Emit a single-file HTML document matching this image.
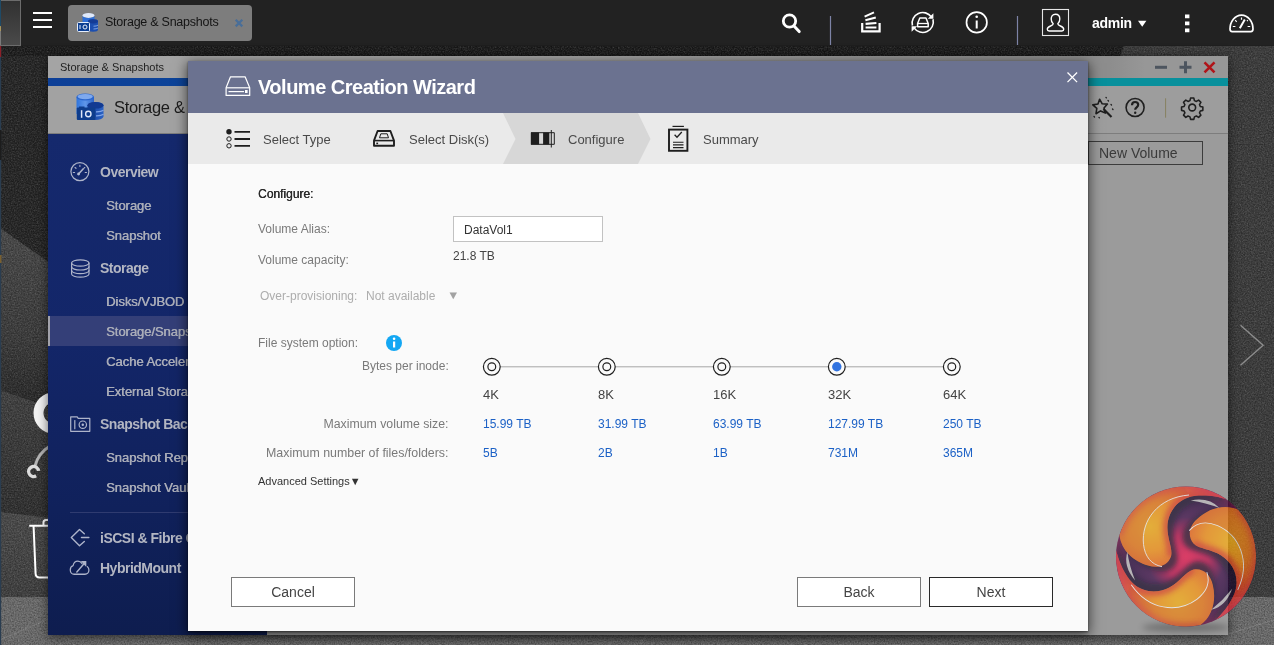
<!DOCTYPE html>
<html lang="en">
<head>
<meta charset="utf-8">
<title>Volume Creation Wizard</title>
<style>
*{box-sizing:border-box;margin:0;padding:0}
html,body{width:1274px;height:645px;overflow:hidden}
body{font-family:"Liberation Sans",sans-serif;background:#2b2b2b;position:relative;color:#333}
.abs{position:absolute}
.t{position:absolute;white-space:nowrap;line-height:1}
#topbar,#win,#dlg{will-change:transform}
/* desktop */
#desk{position:absolute;left:0;top:0;width:1274px;height:645px}
/* top bar */
#topbar{position:absolute;left:0;top:0;width:1274px;height:46px;background:linear-gradient(180deg,#222 0,#222 45px,#1f1f1f 45px,#1f1f1f 46px)}
#tab{position:absolute;left:68px;top:5px;width:184px;height:36px;background:#7d7d7d;border-radius:4px}
/* window */
#win{position:absolute;left:48px;top:56px;width:1180px;height:579px;background:#9b9b9b;box-shadow:0 2px 10px rgba(0,0,0,.6)}
#wtitle{position:absolute;left:0;top:0;width:1180px;height:22px;background:linear-gradient(90deg,#a4a4a4 0%,#a4a4a4 40%,#8d8d8d 80%,#8d8d8d 90%,#979797 93%,#979797 100%)}
#wstripe{position:absolute;left:0;top:22px;width:1180px;height:8px;background:linear-gradient(90deg,#0d3f97 0%,#0c4a9c 25%,#0a7fa6 60%,#08909c 88%,#08909c 100%)}
#wtool{position:absolute;left:0;top:30px;width:1180px;height:48px;background:linear-gradient(90deg,#a2a2a2 0%,#a2a2a2 50%,#9d9d9d 90%);border-bottom:1px solid #7d7d7d}
#side{position:absolute;left:0;top:78px;width:219px;height:501px;background:linear-gradient(180deg,#15296d 0%,#132669 40%,#10215b 75%,#0e1d4f 100%)}
.nav{position:absolute;white-space:nowrap;line-height:1;color:#a9acb8;font-size:13px;font-weight:normal;letter-spacing:-0.05px;text-shadow:0.5px 0 0 #a9acb8}
.navh{font-size:14px;color:#b3b6c2;letter-spacing:-0.5px;font-weight:bold;text-shadow:none}
/* dialog */
#dlg{position:absolute;left:188px;top:61px;width:900px;height:570px;background:#fafafa;box-shadow:0 3px 12px 1px rgba(0,0,0,.62),0 1px 2px rgba(0,0,0,.5)}
#dhead{position:absolute;left:0;top:0;width:900px;height:52px;background:#6b7290}
#dsteps{position:absolute;left:0;top:52px;width:900px;height:51px;background:#eaeaea}
.lbl{position:absolute;white-space:nowrap;line-height:1;font-size:12px;color:#7a7a7a}
.val{position:absolute;white-space:nowrap;line-height:1;font-size:12px;color:#1c61c6}
.btn{position:absolute;height:30px;width:124px;border:1px solid #7a7a7a;background:#fff;font-size:14px;color:#444;text-align:center;line-height:28px}
</style>
</head>
<body>
<div id="desk">
<svg width="1274" height="645" viewBox="0 0 1274 645" style="position:absolute;left:0;top:0">
  <defs>
    <filter id="noiseW" x="0" y="0" width="100%" height="100%">
      <feTurbulence type="fractalNoise" baseFrequency="0.7" numOctaves="2" seed="7" result="n"/>
      <feColorMatrix type="matrix" values="0 0 0 0 1  0 0 0 0 1  0 0 0 0 1  0.3 0 0 0 -0.11"/>
    </filter>
    <filter id="noiseB" x="0" y="0" width="100%" height="100%">
      <feTurbulence type="fractalNoise" baseFrequency="0.7" numOctaves="2" seed="23" result="n"/>
      <feColorMatrix type="matrix" values="0 0 0 0 0  0 0 0 0 0  0 0 0 0 0  0.6 0 0 0 -0.22"/>
    </filter>
    <linearGradient id="pgA" x1="0" y1="0" x2="0" y2="1"><stop offset="0" stop-color="#494949"/><stop offset="0.6" stop-color="#3a3a3a"/><stop offset="1" stop-color="#252525"/></linearGradient>
    <linearGradient id="pgB" x1="0" y1="0" x2="0" y2="1"><stop offset="0" stop-color="#414141"/><stop offset="1" stop-color="#2d2d2d"/></linearGradient>
    <linearGradient id="pgC" x1="0" y1="0" x2="0" y2="1"><stop offset="0" stop-color="#4a4a4a"/><stop offset="1" stop-color="#3e3e3e"/></linearGradient>
  </defs>
  <rect width="1274" height="645" fill="#242424"/>
  <rect x="0" y="45" width="1274" height="11" fill="#1b1b1b"/>
  <!-- lighter polygons on left -->
  <polygon points="0,228 60,270 60,411 0,390" fill="url(#pgA)"/>
  <polygon points="0,390 60,411 60,519 0,512" fill="url(#pgB)"/>
  <polygon points="0,512 60,519 60,597 0,597" fill="url(#pgC)"/>
  <!-- right lighter polygon -->
  <polygon points="1124,45 1274,45 1274,597 1190,597 1190,56 1120,56" fill="#3b3b3b"/>
  <!-- bottom bar -->
  <rect x="0" y="597" width="1274" height="48" fill="#6c6c6c"/>
  <path d="M0 640L70 610M640 645l20-35M1228 634l46-14" stroke="#808080" stroke-width="1" fill="none"/>
  <rect width="1274" height="645" fill="#fff" filter="url(#noiseW)"/>
  <rect width="1274" height="645" fill="#000" filter="url(#noiseB)"/>
  <!-- left edge sliver of another window -->
  <rect x="0" y="45" width="1.200" height="600" fill="#2a3d50"/>
  <rect x="0" y="46" width="1.200" height="11" fill="#8c2028"/>
  <rect x="0" y="255" width="1.500" height="8" fill="#7a6030"/>
  <rect x="0" y="130" width="1.500" height="30" fill="#1c1c1c"/>
  <!-- desktop icons partially hidden -->
  <circle cx="54.200" cy="413" r="15.700" fill="none" stroke="#f2f2f2" stroke-width="10"/>
  <path d="M50 446c-8 5-13 12-15 20" fill="none" stroke="#b5b5b5" stroke-width="3"/>
  <circle cx="33.600" cy="471.500" r="5" fill="none" stroke="#dcdcdc" stroke-width="3.400" stroke-dasharray="25 6.400" transform="rotate(60 33.600 471.500)"/>
  <path d="M29.200 525.800H50M43.500 525.800v-3.300a2.500 2.500 0 0 1 2.500-2.500h4M33.600 526.500l2 47.500a3.500 3.500 0 0 0 3.500 3.400H50" fill="none" stroke="#fff" stroke-width="2"/>
  <!-- next arrow -->
  <path d="M1240.500 325.300l22.600 20l-22.600 20" fill="none" stroke="#8c8c8c" stroke-width="1.400"/>
</svg>
</div>

<div id="topbar">
  <div class="abs" style="left:0;top:0;width:21px;height:46px;background:linear-gradient(180deg,#313131,#4a4a4a);border:1px solid #6c6c6c"></div>
  <div class="abs" style="left:0;top:0;width:1px;height:45px;background:linear-gradient(180deg,#1f4a66 0%,#1f4a66 57%,#a8945a 59%,#a8945a 68%,#7a7a7a 70%,#7a7a7a 100%)"></div>
  <!-- hamburger -->
  <div class="abs" style="left:33px;top:12px;width:19px;height:2px;background:#fff"></div>
  <div class="abs" style="left:33px;top:19px;width:19px;height:2px;background:#fff"></div>
  <div class="abs" style="left:33px;top:26px;width:19px;height:2px;background:#fff"></div>
  <div id="tab">
    <div class="t" style="left:37px;top:11px;font-size:12.5px;letter-spacing:-0.25px;color:#141414">Storage &amp; Snapshots</div>
  </div>
  <div class="t" style="left:1092px;top:16px;font-size:14px;font-weight:bold;color:#fff;letter-spacing:-0.3px">admin</div>
  <svg class="abs" style="left:0;top:0" width="1274" height="45" viewBox="0 0 1274 45" fill="none" stroke="#fff" stroke-linecap="butt">
    <!-- tab app icon -->
    <g stroke="none">
      <ellipse cx="88.500" cy="15.500" rx="6" ry="2.500" fill="#dfe9fb"/>
      <path d="M82.500 15.500v9h12v-9a6 2.500 0 0 1-12 0z" fill="#2f6fd6"/>
      <path d="M88 21.500a5 2.200 0 0 1 10 0v8a5 2.200 0 0 1-10 0z" fill="#1c4fb0"/>
      <ellipse cx="93" cy="21.300" rx="5" ry="2.100" fill="#143c96"/>
      <path d="M93.500 26.200a5 2 0 0 0 4.500-1M93.500 29a5 2 0 0 0 4.500-1" stroke="#7fa4e6" stroke-width="1" fill="none"/>
      <rect x="77.500" y="22.500" width="12" height="9" rx="1" fill="#0d3f92" stroke="#e6eefc" stroke-width="1"/>
      <circle cx="85" cy="27" r="2" fill="none" stroke="#e6eefc" stroke-width="1"/>
      <rect x="79.500" y="25" width="1" height="4" fill="#e6eefc"/>
    </g>
    <path d="M235.700 19.800l6.600 6.600M242.300 19.800l-6.600 6.600" stroke="#496e98" stroke-width="2.300"/>
    <!-- search -->
    <circle cx="789.500" cy="21" r="6.200" stroke-width="2.800"/>
    <path d="M794 26l5.200 5.600" stroke-width="3" stroke-linecap="round"/>
    <!-- separators -->
    <path d="M830.500 16v29M1017.500 16v29" stroke="#7d83a6" stroke-width="1.200"/>
    <!-- inbox / tasks -->
    <path d="M862.200 23v8.400h17.400V23" stroke-width="2.200"/>
    <path d="M865.600 27.500h10.800M865.600 23.900l10.800-0.900M865.400 20.200l10.400-2.600M864.600 16.600l9.400-4.200" stroke-width="2.100"/>
    <!-- sync drive -->
    <path d="M912.400 25.500a10.600 10.600 0 0 1 19-8.500M933 19.300a10.600 10.600 0 0 1-19 8.600" stroke-width="1.600"/>
    <path d="M933.400 13.200v5.600h-5.600zM911.600 31.800v-5.600h5.600z" fill="#fff" stroke="none"/>
    <path d="M919.800 17.900h6.200l2.200 5.600v3.300h-10.600v-3.300z" stroke-width="1.500" stroke-linejoin="round"/>
    <path d="M917.600 23.500h10.600" stroke-width="1.300"/>
    <!-- info -->
    <circle cx="976.700" cy="22.400" r="10.200" stroke-width="1.700"/>
    <path d="M976.700 20.500v8" stroke-width="2"/>
    <circle cx="976.700" cy="16.800" r="1.300" fill="#fff" stroke="none"/>
    <!-- user -->
    <rect x="1042.500" y="9.500" width="26" height="26" stroke="#e6e6e6" stroke-width="1.100"/>
    <path d="M1055.500 14.200c3 0 4.300 2.200 4.300 4.800c0 2.300-1 3.900-2 4.800c0 1.200 1 1.600 2.600 2.200c2.200 0.800 3.300 1.700 3.300 3.300c0 1-0.800 1.700-1.800 1.700h-12.800c-1 0-1.800-0.700-1.800-1.700c0-1.600 1.100-2.500 3.300-3.300c1.600-0.600 2.600-1 2.600-2.200c-1-0.900-2-2.500-2-4.800c0-2.600 1.300-4.800 4.300-4.800z" stroke-width="1.400"/>
    <!-- caret -->
    <path d="M1138 20.800h8.400l-4.200 6z" fill="#fff" stroke="none"/>
    <!-- dots -->
    <path d="M1185 14.500h4.400v3.800H1185zM1185 21.500h4.400v3.800H1185zM1185 28.500h4.400v3.800H1185z" fill="#fff" stroke="none"/>
    <!-- gauge -->
    <path d="M1232.200 31.700c-1.200 0-2.200-1-2.200-2.600c0-7.400 5-14 11.500-14s11.500 6.600 11.500 14c0 1.600-1 2.600-2.200 2.600z" stroke-width="1.700"/>
    <path d="M1239.800 28.200l5-8.600" stroke-width="2"/>
    <path d="M1232.800 26.500h2.600M1247.600 26.500h2.600M1241.500 17.600v2.200M1235.200 20.200l1.500 1.600M1247.800 20.200l-0.800 0.900" stroke-width="1.200"/>
  </svg>
</div>

<div id="win">
  <div id="wtitle"><div class="t" style="left:12px;top:6px;font-size:11px;color:#222">Storage &amp; Snapshots</div></div>
  <div id="wstripe"></div>
  <div id="wtool">
    <div class="t" style="left:66px;top:13px;font-size:16.5px;letter-spacing:-0.3px;color:#1c1c1c">Storage &amp; Snapshots</div>
  </div>
  <div id="side">
    <div class="abs" style="left:0;top:182px;width:219px;height:30px;background:#343f78"></div>
    <div class="abs" style="left:0;top:182px;width:2px;height:30px;background:#a2a2aa"></div>
    <div class="nav navh" style="left:52px;top:31px">Overview</div>
    <div class="nav" style="left:58px;top:65px">Storage</div>
    <div class="nav" style="left:58px;top:95px">Snapshot</div>
    <div class="nav navh" style="left:52px;top:127px">Storage</div>
    <div class="nav" style="left:58px;top:161px">Disks/VJBOD</div>
    <div class="nav" style="left:58px;top:191px">Storage/Snapshots</div>
    <div class="nav" style="left:58px;top:221px">Cache Acceleration</div>
    <div class="nav" style="left:58px;top:251px">External Storage</div>
    <div class="nav navh" style="left:52px;top:283px">Snapshot Backup</div>
    <div class="nav" style="left:58px;top:317px">Snapshot Replica</div>
    <div class="nav" style="left:58px;top:347px">Snapshot Vault</div>
    <div class="abs" style="left:22px;top:378px;width:197px;height:1px;background:#2f3b70"></div>
    <div class="nav navh" style="left:52px;top:397px">iSCSI &amp; Fibre Channel</div>
    <div class="nav navh" style="left:52px;top:427px">HybridMount</div>
  </div>
  <svg class="abs" style="left:0;top:0" width="1180" height="578" viewBox="0 0 1180 578" fill="none">
    <!-- app icon -->
    <defs>
      <linearGradient id="cylA" x1="0" y1="0" x2="1" y2="0"><stop offset="0" stop-color="#2f74dc"/><stop offset="0.5" stop-color="#5f97ea"/><stop offset="1" stop-color="#2a63c8"/></linearGradient>
      <linearGradient id="cylB" x1="0" y1="0" x2="1" y2="0"><stop offset="0" stop-color="#16409c"/><stop offset="1" stop-color="#2a62c4"/></linearGradient>
    </defs>
    <path d="M28.500 41v17h17.500V41z" fill="url(#cylA)"/>
    <ellipse cx="37.200" cy="41" rx="8.800" ry="3.600" fill="#2a66cf"/>
    <ellipse cx="37.200" cy="40.600" rx="7.600" ry="2.700" fill="#7fa9ee"/>
    <path d="M39.500 49.500a8 3.400 0 0 1 16 0v11a8 3.400 0 0 1-16 0z" fill="url(#cylB)"/>
    <ellipse cx="47.500" cy="49.300" rx="8" ry="3.300" fill="#123a92"/>
    <path d="M48 55.800a8 3 0 0 0 7.500-1.500M48 59.800a8 3 0 0 0 7.500-1.500" stroke="#7fa4e6" stroke-width="1.300"/>
    <rect x="28.800" y="51.500" width="18.600" height="12.600" rx="1" fill="#0e3d8c"/>
    <path d="M31 50.500h5.500v1.500H31z" fill="#0e3d8c"/>
    <circle cx="40.300" cy="58" r="2.700" stroke="#dfe8f8" stroke-width="1.400"/>
    <path d="M33.600 54.200v7.600" stroke="#dfe8f8" stroke-width="1.500"/>
    <!-- window controls -->
    <path d="M1107 11.300h12" stroke="#4d555f" stroke-width="3"/>
    <path d="M1131.500 11.300h12M1137.500 5.300v12" stroke="#4d555f" stroke-width="3"/>
    <path d="M1156.500 6.300l10 10M1166.500 6.300l-10 10" stroke="#b01419" stroke-width="2.600"/>
    <!-- toolbar right icons -->
    <g stroke="#1f1f1f" stroke-width="1.600" stroke-linejoin="round">
      <path d="M1051.600 43.200l2.600 4.600l5.200 0.300l-3.400 4l1.400 5l-4.800-2.200l-4.600 2.800l0.800-5.300l-4-3.500l5.200-0.900z"/>
      <path d="M1055.500 53l8 8" stroke-width="2.200"/>
      <path d="M1060 44.500l0.500 0.500M1063 48.500l0.500 0.500M1064.500 53l0.500 0.500M1058 41.500l0.400 0.400M1046 60.500l0.500 0.500M1051 61.500l0.400 0.400" stroke-width="1.300" stroke-linecap="round"/>
      <circle cx="1087.100" cy="51.500" r="9"/>
      <path d="M1084 49.200c0-2 1.300-3.200 3.100-3.200s3.100 1.100 3.100 2.800c0 2.600-3 2.500-3 5" stroke-width="2.200"/>
      <circle cx="1087.200" cy="56.800" r="1.200" fill="#1f1f1f" stroke="none"/>
      <path d="M1117.600 42.300v19.400" stroke="#86815f" stroke-width="1"/>
      <circle cx="1144.200" cy="51.500" r="3.400"/>
      <path id="gear" transform="translate(1144.200 51.500) scale(0.82) translate(-1144.200 -51.500)" stroke-width="1.900" d="M1142.200 40h4l0.700 3.100l2.400 1l2.700-1.700l2.800 2.800l-1.700 2.700l1 2.400l3.100 0.700v4l-3.100 0.700l-1 2.400l1.700 2.700l-2.800 2.800l-2.700-1.700l-2.400 1l-0.700 3.100h-4l-0.700-3.100l-2.400-1l-2.700 1.700l-2.800-2.800l1.700-2.700l-1-2.400l-3.100-0.700v-4l3.100-0.700l1-2.400l-1.700-2.700l2.800-2.800l2.700 1.700l2.400-1z"/>
    </g>
    <!-- sidebar icons -->
    <g stroke="#aeb4ca" stroke-width="1.200" stroke-linecap="round" stroke-linejoin="round">
      <circle cx="31.900" cy="115.600" r="9"/>
      <path d="M30.300 118.200l5-5.400" stroke-width="1.600"/>
      <circle cx="30.600" cy="118" r="1.400" fill="#b3bad2" stroke="none"/>
      <path d="M25.300 116.500l1.300 0M27 111.500l1 0.800M31.900 109.200v1.300M36.800 111.500l-0.600 0.500M38.500 116.500h-1.300" stroke-width="1.100"/>
      <!-- storage db -->
      <ellipse cx="32.300" cy="207" rx="8.700" ry="3.200"/>
      <path d="M23.600 207v11a8.700 3.200 0 0 0 17.400 0v-11"/>
      <path d="M23.600 210.800a8.700 3.200 0 0 0 17.400 0M23.600 214.500a8.700 3.200 0 0 0 17.400 0"/>
      <!-- snapshot -->
      <path d="M22.700 375.300v-14.500h6.500l1 1.600h11.600v12.900z"/>
      <path d="M26.800 364.500v8.200"/>
      <circle cx="34.800" cy="368.700" r="3.700"/>
      <circle cx="34.800" cy="368.700" r="1.200" fill="#b3bad2" stroke="none"/>
      <!-- iscsi -->
      <path d="M36.300 477.800l-4.800-4.300l-8.200 8.100l8.200 8.100l4.800-4.300" stroke-width="1.400"/>
      <path d="M33.500 481.600h7.300" stroke-width="1.500"/>
      <!-- hybrid -->
      <g transform="translate(22 0) scale(0.86 1) translate(-22 0)">
      <path d="M33.500 507.500c-1.200-1.600-3-2.400-4.800-2.400c-2.900 0-5.100 2-5.600 4.600c-2 0.600-3.300 2.200-3.300 4.200c0 2.400 2 4.300 4.500 4.300h12.600c2.600 0 4.600-1.800 4.600-4.200c0-1.300-0.600-2.500-1.700-3.300" stroke-width="1.400" transform="translate(2.500,0)"/>
      <path d="M30 516l9.500-9.500" stroke-width="1.700"/>
      <path d="M34.500 505h6.500v6z" fill="#aeb4ca" stroke="none"/>
      </g>
    </g>
  </svg>
  <div class="abs" style="left:1040px;top:85px;width:115px;height:24px;border:1px solid #3c3c3c"></div>
  <div class="t" style="left:1051px;top:90px;font-size:14px;color:#3a3a3a">New Volume</div>
</div>

<div id="dlg">
  <div id="dhead">
    <div class="t" style="left:70px;top:16px;font-size:20px;font-weight:bold;color:#fff;letter-spacing:-0.5px">Volume Creation Wizard</div>
    <svg class="abs" style="left:0;top:0" width="900" height="52" viewBox="0 0 900 52" fill="none" stroke="#fff">
      <path d="M42.500 15.800h14.600l4.600 11v7.600h-23.600v-7.600z" stroke-width="1.200" stroke-linejoin="round"/>
      <path d="M38.100 26.800h23.600" stroke-width="1.200"/>
      <path d="M40.500 30.600h15.500" stroke-width="1.200"/>
      <rect x="57" y="29" width="2.600" height="3" fill="#fff" stroke="none"/>
      <path d="M879.500 11.500l9.600 9.600M889.100 11.500l-9.600 9.600" stroke-width="1.300"/>
    </svg>
  </div>
  <div id="dsteps">
    <svg class="abs" style="left:0;top:0" width="900" height="52" viewBox="0 0 900 52">
      <polygon points="315,0 450,0 462.500,26 450,51 315,51 327.500,26" fill="#d7d7d7"/>
      <g fill="none" stroke="#1e1e1e">
        <!-- list -->
        <circle cx="41" cy="18.800" r="2.700" fill="#1e1e1e" stroke="none"/>
        <circle cx="41" cy="26" r="2.200" stroke-width="1"/>
        <circle cx="41" cy="32.800" r="2.200" stroke-width="1"/>
        <path d="M46.500 18.800h15.500M46.500 26h15.500M46.500 32.800h15.500" stroke-width="1.800"/>
        <!-- disk -->
        <path d="M189.600 18h12.800l3.600 9.600v5.100h-20v-5.100z" stroke-width="1.900" stroke-linejoin="round"/>
        <path d="M186 27.600h20" stroke-width="1.600"/>
        <path d="M192.800 20.800h6.400l1.300 4h-9z" stroke-width="1"/>
        <rect x="188.300" y="29.600" width="1.800" height="1.600" fill="#1e1e1e" stroke="none"/>
        <!-- configure -->
        <rect x="342.800" y="19.500" width="8.300" height="12" fill="#1e1e1e" stroke="none"/>
        <rect x="355.100" y="19.500" width="6.200" height="12" fill="#1e1e1e" stroke="none"/>
        <path d="M343 19.700h23.300v11.600H343" stroke-width="1"/>
        <path d="M363.300 17v17.500" stroke-width="1"/>
        <!-- summary -->
        <rect x="481" y="16.600" width="18.400" height="21.200" stroke-width="1.900"/>
        <path d="M484.500 13.400h11.400" stroke-width="1.200"/>
        <path d="M486.600 21.800l2.400 2.400l4.800-5.200" stroke-width="1.300"/>
        <path d="M485 29.200h10.500M485 31.900h10.500M485 34.600h10.500" stroke-width="1.100"/>
      </g>
    </svg>
    <div class="t" style="left:75px;top:20px;font-size:13px;color:#4a4a4a">Select Type</div>
    <div class="t" style="left:221px;top:20px;font-size:13px;color:#4a4a4a">Select Disk(s)</div>
    <div class="t" style="left:380px;top:20px;font-size:13px;color:#4a4a4a">Configure</div>
    <div class="t" style="left:515px;top:20px;font-size:13px;color:#4a4a4a">Summary</div>
  </div>

  <div class="lbl" style="left:70px;top:127px;color:#2a2a2a;text-shadow:0.3px 0 0 #2a2a2a">Configure:</div>
  <div class="lbl" style="left:70px;top:162px">Volume Alias:</div>
  <div class="abs" style="left:265px;top:155px;width:150px;height:26px;border:1px solid #c2c2c2;background:#fff"></div>
  <div class="lbl" style="left:276px;top:163px;color:#333">DataVol1</div>
  <div class="lbl" style="left:70px;top:193px">Volume capacity:</div>
  <div class="lbl" style="left:265px;top:189px;color:#444">21.8 TB</div>
  <div class="lbl" style="left:72px;top:229px;color:#adadad">Over-provisioning:</div>
  <div class="lbl" style="left:178px;top:229px;color:#adadad">Not available</div>
  <div class="lbl" style="left:259px;top:229px;color:#a2a2a2;font-size:11px;transform:scale(1.15,1.05);transform-origin:left center">▼</div>
  <div class="lbl" style="left:70px;top:276px">File system option:</div>
  <div class="lbl" style="left:174px;top:299px">Bytes per inode:</div>
  <div class="lbl" style="right:639.500px;top:357px;font-size:12.300px">Maximum volume size:</div>
  <div class="lbl" style="right:639.500px;top:386px;font-size:12.400px">Maximum number of files/folders:</div>

  <svg class="abs" style="left:0;top:0" width="900" height="569" viewBox="0 0 900 569" fill="none">
    <circle cx="206" cy="282" r="8" fill="#13a7f3"/>
    <rect x="205" y="280.500" width="2.200" height="6" fill="#fff"/>
    <circle cx="206.100" cy="277.800" r="1.300" fill="#fff"/>
    <path d="M312 305.800H755" stroke="#a6a6a6" stroke-width="1"/>
    <g stroke="#1f1f1f" stroke-width="1.200" fill="#fafafa">
      <circle cx="303.800" cy="305.800" r="8.400"/><circle cx="303.800" cy="305.800" r="3.900"/>
      <circle cx="418.800" cy="305.800" r="8.400"/><circle cx="418.800" cy="305.800" r="3.900"/>
      <circle cx="533.800" cy="305.800" r="8.400"/><circle cx="533.800" cy="305.800" r="3.900"/>
      <circle cx="648.800" cy="305.800" r="8.400"/>
      <circle cx="763.800" cy="305.800" r="8.400"/><circle cx="763.800" cy="305.800" r="3.900"/>
    </g>
    <circle cx="648.800" cy="305.800" r="4.700" fill="#3173e0"/>
  </svg>
  <div class="lbl" style="left:295px;top:327px;font-size:13px;color:#444">4K</div>
  <div class="lbl" style="left:410px;top:327px;font-size:13px;color:#444">8K</div>
  <div class="lbl" style="left:525px;top:327px;font-size:13px;color:#444">16K</div>
  <div class="lbl" style="left:640px;top:327px;font-size:13px;color:#444">32K</div>
  <div class="lbl" style="left:755px;top:327px;font-size:13px;color:#444">64K</div>

  <div class="val" style="left:295px;top:357px">15.99 TB</div>
  <div class="val" style="left:410px;top:357px">31.99 TB</div>
  <div class="val" style="left:525px;top:357px">63.99 TB</div>
  <div class="val" style="left:640px;top:357px">127.99 TB</div>
  <div class="val" style="left:755px;top:357px">250 TB</div>

  <div class="val" style="left:295px;top:386px">5B</div>
  <div class="val" style="left:410px;top:386px">2B</div>
  <div class="val" style="left:525px;top:386px">1B</div>
  <div class="val" style="left:640px;top:386px">731M</div>
  <div class="val" style="left:755px;top:386px">365M</div>

  <div class="lbl" style="left:70px;top:415px;font-size:11px;color:#333">Advanced Settings▼</div>

  <div class="btn" style="left:43px;top:516px">Cancel</div>
  <div class="btn" style="left:609px;top:516px">Back</div>
  <div class="btn" style="left:741px;top:516px;border-color:#2a2a2a">Next</div>
</div>
<svg class="abs" style="left:1100px;top:470px" width="174" height="175" viewBox="-86 -86.500 174 175">
  <defs>
    <radialGradient id="lgBase" cx="0" cy="0" r="70" gradientUnits="userSpaceOnUse">
      <stop offset="0" stop-color="#f21a52"/><stop offset="0.320" stop-color="#c01250"/><stop offset="0.560" stop-color="#43124d"/><stop offset="0.800" stop-color="#2b0a3f"/><stop offset="1" stop-color="#6c0c43"/>
    </radialGradient>
    <radialGradient id="lgLobe" cx="-36" cy="-30" r="70" gradientUnits="userSpaceOnUse">
      <stop offset="0" stop-color="#ffb616"/><stop offset="0.350" stop-color="#ff9716"/><stop offset="0.680" stop-color="#f55a1c"/><stop offset="1" stop-color="#e42443"/>
    </radialGradient>
    <filter id="lgBlur" x="-30%" y="-30%" width="160%" height="160%"><feGaussianBlur stdDeviation="2.200"/></filter>
    <filter id="lgBlur2" x="-30%" y="-100%" width="160%" height="300%"><feGaussianBlur stdDeviation="3"/></filter>
    <filter id="lgBlur3" x="-30%" y="-30%" width="160%" height="160%"><feGaussianBlur stdDeviation="2.600"/></filter>
    <clipPath id="lgClip"><circle cx="0" cy="0" r="70"/></clipPath>
    <path id="lobeShape" d="M40-57.400A70 70 0 0 0-66.500-21.800C-65-6-52 5-38 9C-28 12.500-18 9-15 0C-13-8-19-18-18.600-30C-18-45-8-58 8-60.500C20-62 32-60 40-57.400Z"/>
    <clipPath id="lobeClip"><use href="#lobeShape"/></clipPath>
    <g id="lobeFull">
      <use href="#lobeShape" fill="url(#lgLobe)"/>
      <g clip-path="url(#lobeClip)">
        <path d="M-15 0C-13-8-19-18-18.600-30C-18-45-8-58 8-60.500C20-62 32-60 40-57.400" fill="none" stroke="#e02a2a" stroke-width="9" opacity="0.700" filter="url(#lgBlur3)"/>
        <path d="M3-61.500C-28-59-45-36-42.500-12C-41 0-35 8-24 10.200L-38 9C-52 5-65-6-66.500-21.800A70 70 0 0 1-2-70Z" fill="#d03a18" opacity="0.300"/>
        <path d="M-66.500-21.800A70 70 0 0 1 40-57.400" fill="none" stroke="#e02a40" stroke-width="7" opacity="0.450" filter="url(#lgBlur3)"/>
      </g>
      <path d="M3-61.500C-28-59-45-36-42.500-12C-41 0-35 8-24 10.200" fill="none" stroke="#fff" stroke-width="0.900" opacity="1"/>
    </g>
    <path id="lgGap" d="M-58.700-4.800Q-63 10-50.900 23.900Q-56.500 10-58.700-4.800Z"/>
  </defs>
  <ellipse cx="0" cy="71" rx="44" ry="4.500" fill="#000" opacity="0.280" filter="url(#lgBlur2)"/>
  <g opacity="0.720">
    <circle cx="0" cy="0" r="70" fill="url(#lgBase)"/>
    <g clip-path="url(#lgClip)">
      <g fill="#160a26" opacity="0.800" filter="url(#lgBlur)">
        <use href="#lobeShape" transform="translate(6 5)"/>
        <use href="#lobeShape" transform="rotate(120) translate(6 5)"/>
        <use href="#lobeShape" transform="rotate(240) translate(6 5)"/>
      </g>
      <use href="#lobeFull"/>
      <use href="#lobeFull" transform="rotate(120)"/>
      <use href="#lobeFull" transform="rotate(240)"/>
      <g fill="#c2bec2" opacity="1">
        <use href="#lgGap"/>
        <use href="#lgGap" transform="rotate(120)"/>
        <use href="#lgGap" transform="rotate(240)"/>
      </g>
    </g>
  </g>
</svg>
</body>
</html>
